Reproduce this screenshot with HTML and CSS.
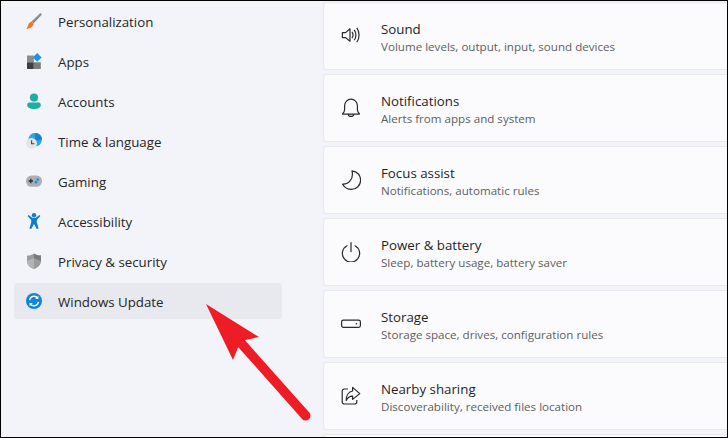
FILE: index.html
```html
<!DOCTYPE html>
<html lang="en">
<head>
<meta charset="utf-8">
<title>Settings</title>
<link rel="stylesheet" href="styles.css">
</head>
<body>
<div class="window">
  <nav class="sidebar">
    <div class="nav-item">
      <svg class="nav-icon" viewBox="0 0 16 16"><path d="M14.4 0 L16 1.4 L7.6 10.6 L5.4 8.6Z" fill="#8d8f92"/><path d="M5.2 8.4 L7.8 10.8 C7.2 13.6 4 16 0 15.8 C2.2 14.2 2 9.8 5.2 8.4Z" fill="#f7761f"/></svg>
      <span>Personalization</span>
    </div>
    <div class="nav-item">
      <svg class="nav-icon" viewBox="0 0 16 16"><rect x="1" y="2.5" width="6.8" height="6.8" fill="#8c8c8c"/><rect x="1" y="9.3" width="6.8" height="6.7" fill="#3f3f42"/><rect x="7.8" y="9.3" width="7" height="6.7" fill="#7b7b7d"/><path d="M11.2 0 L15.6 4.4 L11.2 8.8 L6.8 4.4Z" fill="#1a93e8"/></svg>
      <span>Apps</span>
    </div>
    <div class="nav-item">
      <svg class="nav-icon" viewBox="0 0 16 16"><circle cx="8" cy="4.6" r="4.1" fill="#1fae9f"/><path d="M1.2 12 C1.2 10 2.4 9.6 4 9.6 H12 C13.6 9.6 14.8 10 14.8 12 C14.8 14.6 11.6 16 8 16 C4.4 16 1.2 14.6 1.2 12Z" fill="#1fae9f"/></svg>
      <span>Accounts</span>
    </div>
    <div class="nav-item">
      <svg class="nav-icon" viewBox="0 0 16 16"><circle cx="9.2" cy="6.6" r="6.8" fill="#27a9e3"/><path d="M9.2 0 A6.8 6.8 0 0 1 16 6.6 L9 8Z" fill="#1a7fd0"/><circle cx="5.6" cy="10.4" r="5.4" fill="#e4e4e6"/><path d="M5.6 7.2 V10.8 H8.4" fill="none" stroke="#444" stroke-width="1.1"/></svg>
      <span>Time &amp; language</span>
    </div>
    <div class="nav-item">
      <svg class="nav-icon" viewBox="0 0 16 16"><rect x="0" y="2.4" width="16" height="11.4" rx="5.6" fill="#adafb3"/><path d="M2.6 8 H7 M4.8 5.8 V10.2" stroke="#2d2d2d" stroke-width="1.3"/><circle cx="11.8" cy="6.6" r="1.3" fill="#1a8fe0"/><circle cx="10" cy="9.2" r="1.4" fill="#1a8fe0"/></svg>
      <span>Gaming</span>
    </div>
    <div class="nav-item">
      <svg class="nav-icon" viewBox="0 0 16 16"><circle cx="8" cy="2.2" r="2.2" fill="#0d7cc9"/><path d="M1.6 3 L2.6 2 L6.6 5 H9.4 L13.4 2 L14.4 3 L10.8 7 V9.6 L12.6 15.4 L10.8 16 L8 11 L5.2 16 L3.4 15.4 L5.2 9.6 V7Z" fill="#0d7cc9"/></svg>
      <span>Accessibility</span>
    </div>
    <div class="nav-item">
      <svg class="nav-icon" viewBox="0 0 16 16"><path d="M8 0.6 C10 2 12.4 2.6 15 2.6 V8 C15 12 12 14.6 8 16 C4 14.6 1 12 1 8 V2.6 C3.6 2.6 6 2 8 0.6Z" fill="#9a9b9e"/><path d="M8 0.6 C10 2 12.4 2.6 15 2.6 V8 L8 5Z" fill="#797a7d"/><path d="M1 8 L8 5 V16 C4 14.6 1 12 1 8Z" fill="#b3b4b7"/></svg>
      <span>Privacy &amp; security</span>
    </div>
    <div class="nav-item active">
      <svg class="nav-icon" viewBox="0 0 16 16"><circle cx="8" cy="8" r="8" fill="#0f86dc"/><path d="M3.6 7.2 A4.5 4.5 0 0 1 11.6 5 M12.4 8.8 A4.5 4.5 0 0 1 4.4 11" fill="none" stroke="#fff" stroke-width="1.3"/><path d="M12.4 2.8 V6 H9.2Z M3.6 13.2 V10 H6.8Z" fill="#fff"/></svg>
      <span>Windows Update</span>
    </div>
  </nav>
  <main class="cards">
    <section class="card">
      <svg class="card-icon" viewBox="0 0 20 20"><path d="M1.4 6.6 H4.6 L9 2.8 V15.2 L4.6 11.6 H1.4Z M11 5.8 C12.2 7.6 12.2 10.4 11 12.2 M13.2 3.8 C15.2 6.8 15.2 11.2 13.2 14.2 M15.8 1.8 C18.8 5.8 18.8 12.2 15.8 16.2" fill="none" stroke="#2a2a2a" stroke-width="1.2" stroke-linejoin="round"/></svg>
      <div class="card-text"><div class="card-title">Sound</div><div class="card-sub">Volume levels, output, input, sound devices</div></div>
    </section>
    <section class="card">
      <svg class="card-icon" viewBox="0 0 20 20"><path d="M1.8 15.4 C3.2 14.4 3.6 13.4 3.6 11.6 V7.8 C3.6 4.2 6.4 1.2 10 1.2 C13.6 1.2 16.4 4.2 16.4 7.8 V11.6 C16.4 13.4 16.8 14.4 18.2 15.4 C18.6 15.8 18.4 16.2 17.8 16.2 H2.2 C1.6 16.2 1.4 15.8 1.8 15.4Z M7.2 16.2 C7.4 19.2 12.6 19.2 12.8 16.2" fill="none" stroke="#2a2a2a" stroke-width="1.2"/></svg>
      <div class="card-text"><div class="card-title">Notifications</div><div class="card-sub">Alerts from apps and system</div></div>
    </section>
    <section class="card">
      <svg class="card-icon" viewBox="0 0 20 20"><path d="M11 0.8 C16 1.4 19.6 5 19.6 10 C19.6 15.4 15.4 19.4 10.4 19.4 C6.8 19.4 3.4 17.2 1.6 14.2 C7.4 14.6 13 9 11 0.8Z" fill="none" stroke="#2a2a2a" stroke-width="1.2" stroke-linejoin="round"/></svg>
      <div class="card-text"><div class="card-title">Focus assist</div><div class="card-sub">Notifications, automatic rules</div></div>
    </section>
    <section class="card">
      <svg class="card-icon" viewBox="0 0 20 20"><path d="M6 3.8 A8.6 8.6 0 1 0 14 3.8 M10 0.6 V9.6" fill="none" stroke="#2a2a2a" stroke-width="1.2" stroke-linecap="round"/></svg>
      <div class="card-text"><div class="card-title">Power &amp; battery</div><div class="card-sub">Sleep, battery usage, battery saver</div></div>
    </section>
    <section class="card">
      <svg class="card-icon" viewBox="0 0 20 20"><rect x="0.6" y="6.2" width="18.8" height="7.2" rx="1.8" fill="none" stroke="#2a2a2a" stroke-width="1.2"/><circle cx="15.4" cy="9.8" r="0.8" fill="#2a2a2a"/></svg>
      <div class="card-text"><div class="card-title">Storage</div><div class="card-sub">Storage space, drives, configuration rules</div></div>
    </section>
    <section class="card">
      <svg class="card-icon" viewBox="0 0 20 20"><path d="M7 3 H3.4 C2 3 1.2 3.8 1.2 5.2 V15.8 C1.2 17.2 2 18 3.4 18 H13.6 C15 18 15.8 17.2 15.8 15.8 V14" fill="none" stroke="#2a2a2a" stroke-width="1.2"/><path d="M11.6 1.4 L18.8 7.6 L11.6 13.4 V10.2 C8.6 10 6.8 11.4 5.2 14.4 C5.2 9.6 7.6 5.6 11.6 5Z" fill="none" stroke="#2a2a2a" stroke-width="1.2" stroke-linejoin="round"/></svg>
      <div class="card-text"><div class="card-title">Nearby sharing</div><div class="card-sub">Discoverability, received files location</div></div>
    </section>
    <section class="card"></section>
  </main>
  <svg class="arrow" viewBox="0 0 120 124" width="120" height="124"><path d="M6 4 L59 37 L45.5 40 L38 47.5 L33 60Z" fill="#ee1c25"/><path d="M41 43 L105.7 115.7" stroke="#ee1c25" stroke-width="9.6" stroke-linecap="round"/></svg>
</div>
</body>
</html>
```

FILE: styles.css
```css
* { box-sizing: border-box; }
html, body { margin: 0; padding: 0; }
body { width: 728px; height: 438px; overflow: hidden; background: #000; }
.window {
  position: relative;
  width: 728px;
  height: 438px;
  border: 1px solid #000;
  display: flex;
  overflow: hidden;
  background: #f3f4f9;
  font-family: "Open Sans", "Noto Sans", sans-serif;
  color: #1f1f1f;
}
.sidebar {
  width: 322px;
  flex: none;
  padding: 2px 41px 0 13px;
  display: flex;
  flex-direction: column;
  gap: 4px;
}
.nav-item {
  height: 36px;
  border-radius: 4px;
  display: flex;
  align-items: center;
  gap: 16px;
  padding-left: 12px;
  font-size: 13.3px;
  color: #262626;
}
.nav-item span { margin-top: 2px; }
.nav-item.active { background: #e7e9ee; }
.nav-icon { width: 16px; height: 16px; flex: none; }
.cards {
  flex: 1;
  display: flex;
  flex-direction: column;
  gap: 4px;
  padding-top: 1px;
}
.card {
  height: 68px;
  flex: none;
  background: #fbfbfe;
  border: 1px solid #e7e8ed;
  border-right: 0;
  border-radius: 4px 0 0 4px;
  display: flex;
  align-items: center;
  padding-left: 17px;
  gap: 20px;
}
.card-icon { width: 20px; height: 20px; flex: none; }
.card-text { padding-top: 2px; }
.card-title { font-size: 13.3px; line-height: 18px; color: #1f1f1f; }
.card-sub { font-size: 11.6px; line-height: 16px; color: #5e5e5e; margin-top: 1px; }
.arrow { position: absolute; left: 199px; top: 299px; }
```
